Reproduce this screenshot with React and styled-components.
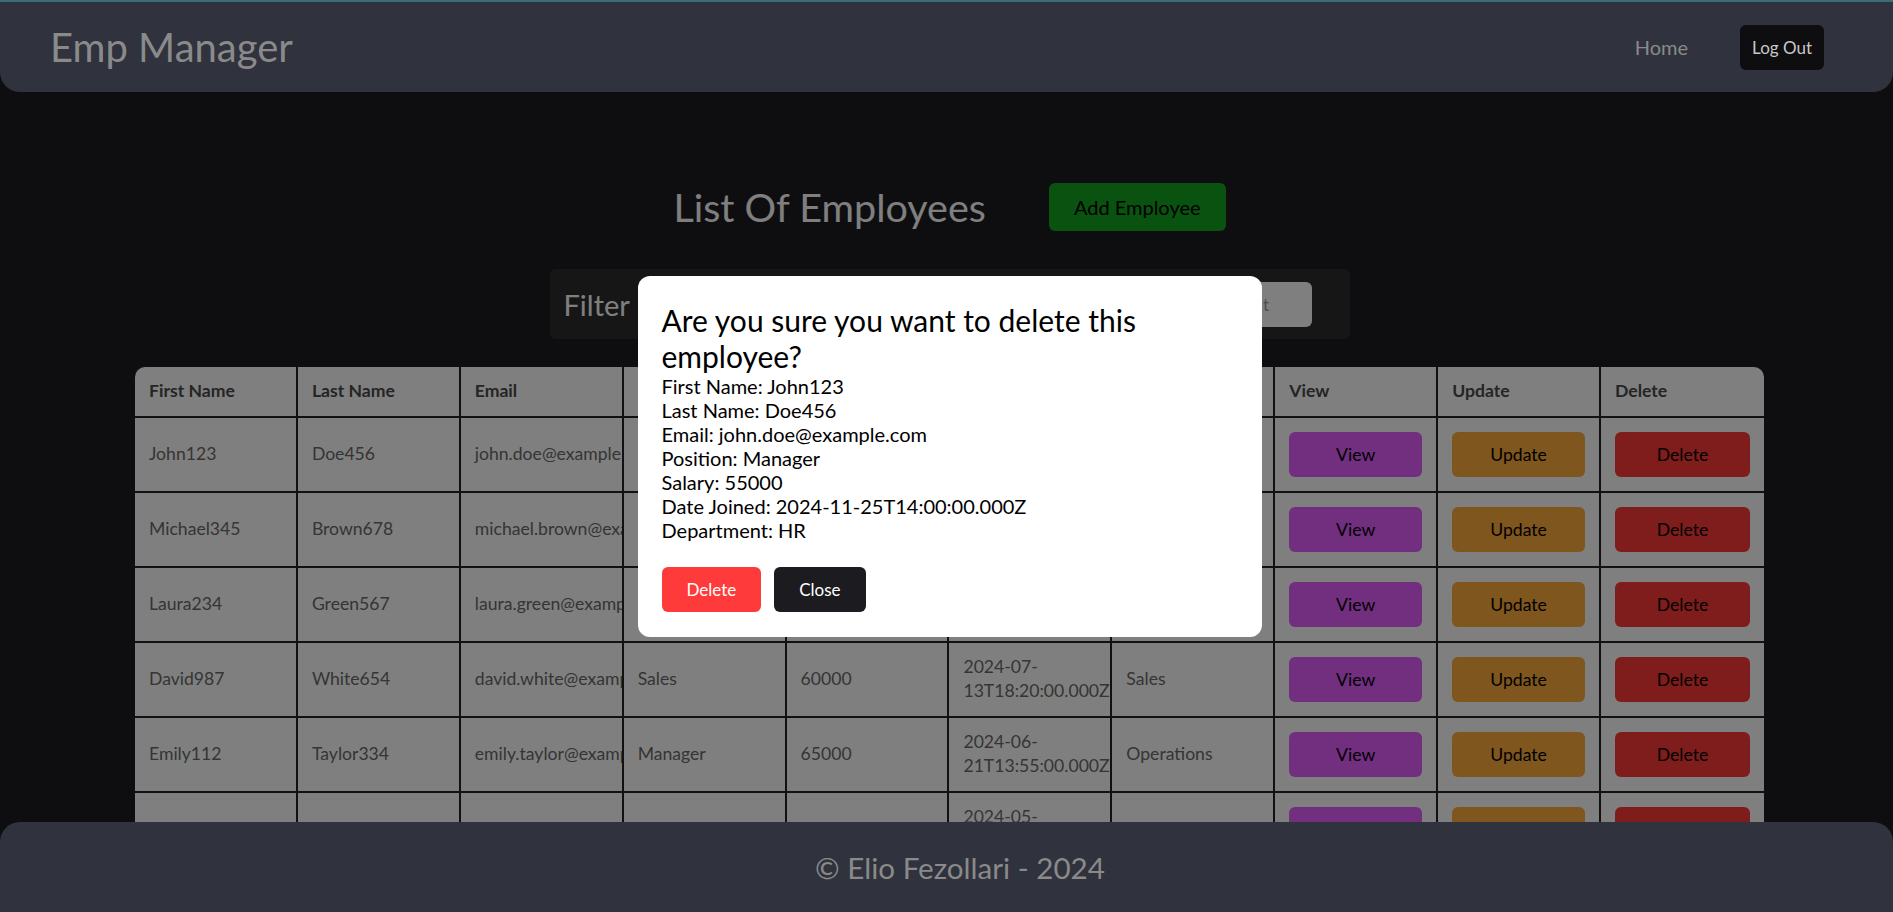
import React from 'react';
import styled, { createGlobalStyle } from 'styled-components';

const employees = [
  { first: 'John123', last: 'Doe456', email: 'john.doe@example.com', position: 'Manager', salary: 55000, joined: '2024-11-25T14:00:00.000Z', dept: 'HR' },
  { first: 'Michael345', last: 'Brown678', email: 'michael.brown@example.com', position: 'Developer', salary: 70000, joined: '2024-10-10T09:30:00.000Z', dept: 'IT' },
  { first: 'Laura234', last: 'Green567', email: 'laura.green@example.com', position: 'Designer', salary: 50000, joined: '2024-08-15T11:45:00.000Z', dept: 'Marketing' },
  { first: 'David987', last: 'White654', email: 'david.white@example.com', position: 'Sales', salary: 60000, joined: '2024-07-13T18:20:00.000Z', dept: 'Sales' },
  { first: 'Emily112', last: 'Taylor334', email: 'emily.taylor@example.com', position: 'Manager', salary: 65000, joined: '2024-06-21T13:55:00.000Z', dept: 'Operations' },
  { first: 'Sophia789', last: 'Clark101', email: 'sophia.clark@example.com', position: 'Analyst', salary: 58000, joined: '2024-05-02T10:15:00.000Z', dept: 'Finance' },
  { first: 'James456', last: 'Lee202', email: 'james.lee@example.com', position: 'Developer', salary: 72000, joined: '2024-04-18T08:40:00.000Z', dept: 'IT' },
];

const selected = employees[0];

const App = () => {
  return (
    <>
      <GlobalStyle />
      <Header>
        <Brand>Emp Manager</Brand>
        <Nav>
          <NavLink>Home</NavLink>
          <LogOutButton>Log Out</LogOutButton>
        </Nav>
      </Header>

      <Main>
        <TitleRow>
          <Title>List Of Employees</Title>
          <AddButton>Add Employee</AddButton>
        </TitleRow>

        <FilterBar>
          <FilterLabel>Filter</FilterLabel>
          <FilterControls>
            <FilterSelect defaultValue="">
              <option value="">All Positions</option>
            </FilterSelect>
            <FilterInput placeholder="Search by department" />
          </FilterControls>
        </FilterBar>

        <TableWrap>
          <Table>
            <thead>
              <tr>
                <Th>First Name</Th>
                <Th>Last Name</Th>
                <Th>Email</Th>
                <Th>Position</Th>
                <Th>Salary</Th>
                <Th>Date Joined</Th>
                <Th>Department</Th>
                <Th>View</Th>
                <Th>Update</Th>
                <Th>Delete</Th>
              </tr>
            </thead>
            <tbody>
              {employees.map((emp) => (
                <tr key={emp.first}>
                  <Td>{emp.first}</Td>
                  <Td>{emp.last}</Td>
                  <Td>{emp.email}</Td>
                  <Td>{emp.position}</Td>
                  <Td>{emp.salary}</Td>
                  <Td>{emp.joined}</Td>
                  <Td>{emp.dept}</Td>
                  <Td><ActionButton $bg="#e45cfe">View</ActionButton></Td>
                  <Td><ActionButton $bg="#ffac3a">Update</ActionButton></Td>
                  <Td><ActionButton $bg="#ff3838">Delete</ActionButton></Td>
                </tr>
              ))}
            </tbody>
          </Table>
        </TableWrap>
      </Main>

      <Backdrop>
        <Modal>
          <ModalTitle>Are you sure you want to delete this employee?</ModalTitle>
          <Detail>First Name: {selected.first}</Detail>
          <Detail>Last Name: {selected.last}</Detail>
          <Detail>Email: {selected.email}</Detail>
          <Detail>Position: {selected.position}</Detail>
          <Detail>Salary: {selected.salary}</Detail>
          <Detail>Date Joined: {selected.joined}</Detail>
          <Detail>Department: {selected.dept}</Detail>
          <ModalActions>
            <ModalButton $bg="#ff3a3a">Delete</ModalButton>
            <ModalButton $bg="#1c1c20">Close</ModalButton>
          </ModalActions>
        </Modal>
      </Backdrop>

      <Footer>© Elio Fezollari - 2024</Footer>
    </>
  );
};

export default App;

const GlobalStyle = createGlobalStyle`
  * {
    box-sizing: border-box;
  }
  html, body {
    margin: 0;
    padding: 0;
  }
  body {
    background: #1c1c20;
    font-family: Lato, "Open Sans", sans-serif;
  }
`;

const Header = styled.header`
  position: relative;
  z-index: 20;
  height: 92px;
  display: flex;
  align-items: center;
  justify-content: space-between;
  padding: 0 69px 0 50px;
  background: #30323e;
  border-top: 2px solid #3d6d74;
  border-radius: 0 0 20px 20px;
`;

const Brand = styled.div`
  font-size: 40px;
  color: #8a8a8a;
`;

const Nav = styled.nav`
  display: flex;
  align-items: center;
  gap: 52px;
`;

const NavLink = styled.a`
  font-size: 20px;
  color: #8a8a8a;
  cursor: pointer;
`;

const LogOutButton = styled.button`
  height: 45px;
  padding: 0 12px;
  border: none;
  border-radius: 6px;
  background: #0e0e10;
  color: #c8c8c8;
  font-family: inherit;
  font-size: 17px;
`;

const Main = styled.main`
  padding: 91px 129px 140px 135px;
`;

const TitleRow = styled.div`
  display: flex;
  align-items: center;
  justify-content: center;
  gap: 63px;
`;

const Title = styled.h1`
  margin: 0;
  font-size: 39.5px;
  font-weight: 400;
  line-height: 48px;
  color: #ffffff;
`;

const AddButton = styled.button`
  height: 48px;
  padding: 0 25px;
  border: none;
  border-radius: 6px;
  background: #14a41e;
  color: #000;
  font-family: inherit;
  font-size: 20px;
`;

const FilterBar = styled.div`
  width: 800px;
  height: 70px;
  margin: 38px auto 0;
  display: flex;
  align-items: center;
  padding: 0 38px 0 14px;
  background: #2c2c2c;
  border-radius: 6px;
`;

const FilterLabel = styled.span`
  font-size: 29px;
  color: #ffffff;
`;

const FilterControls = styled.div`
  margin-left: auto;
  display: flex;
  align-items: center;
  gap: 16px;
`;

const FilterSelect = styled.select`
  height: 45px;
  width: 200px;
  border: none;
  border-radius: 6px;
  padding: 0 10px;
  font-family: inherit;
  font-size: 17px;
`;

const FilterInput = styled.input`
  width: 218px;
  height: 45px;
  border: none;
  border-radius: 6px;
  padding: 0 12px;
  background: #fff;
  font-family: inherit;
  font-size: 17px;

  &::placeholder {
    color: #9a9a9a;
  }
`;

const TableWrap = styled.div`
  margin-top: 28px;
  border-radius: 10px;
  overflow: hidden;
  background: #fff;
`;

const Table = styled.table`
  width: 100%;
  table-layout: fixed;
  border-collapse: separate;
  border-spacing: 0;
`;

const Th = styled.th`
  padding: 12px 14px;
  text-align: left;
  font-size: 17.6px;
  font-weight: 700;
  line-height: 24.5px;
  color: #4a4a4a;
  border-right: 2px solid #222;
  border-bottom: 2px solid #222;
  overflow: hidden;

  &:last-child {
    border-right: none;
  }
`;

const Td = styled.td`
  padding: 12px 14px;
  text-align: left;
  vertical-align: middle;
  font-size: 17.6px;
  line-height: 24.5px;
  color: #6a6a6a;
  border-right: 2px solid #222;
  border-bottom: 2px solid #222;
  overflow: hidden;

  &:last-child {
    border-right: none;
  }
`;

const ActionButton = styled.button`
  display: block;
  width: 100%;
  height: 45px;
  border: none;
  border-radius: 6px;
  background: ${(p) => p.$bg};
  color: #000;
  font-family: inherit;
  font-size: 17.6px;
`;

const Backdrop = styled.div`
  position: fixed;
  inset: 0;
  z-index: 10;
  display: flex;
  align-items: center;
  justify-content: center;
  padding-left: 6px;
  background: rgba(0, 0, 0, 0.5);
`;

const Modal = styled.div`
  width: 624px;
  padding: 26px 24px 25px;
  background: #fff;
  border-radius: 12px;
  color: #000;
`;

const ModalTitle = styled.h2`
  margin: 0;
  font-size: 30px;
  font-weight: 400;
  line-height: 36px;
`;

const Detail = styled.p`
  margin: 0;
  font-size: 20px;
  line-height: 24px;
`;

const ModalActions = styled.div`
  display: flex;
  gap: 13px;
  margin-top: 25px;
`;

const ModalButton = styled.button`
  height: 45px;
  padding: 0 25px;
  border: none;
  border-radius: 6px;
  background: ${(p) => p.$bg};
  color: #fff;
  font-family: inherit;
  font-size: 17px;
`;

const Footer = styled.footer`
  position: fixed;
  left: 0;
  right: 0;
  bottom: 0;
  z-index: 20;
  height: 90px;
  display: flex;
  align-items: center;
  justify-content: center;
  padding-left: 27px;
  background: #30323e;
  border-radius: 20px 20px 0 0;
  font-size: 29.6px;
  color: #8a8a8a;
`;
